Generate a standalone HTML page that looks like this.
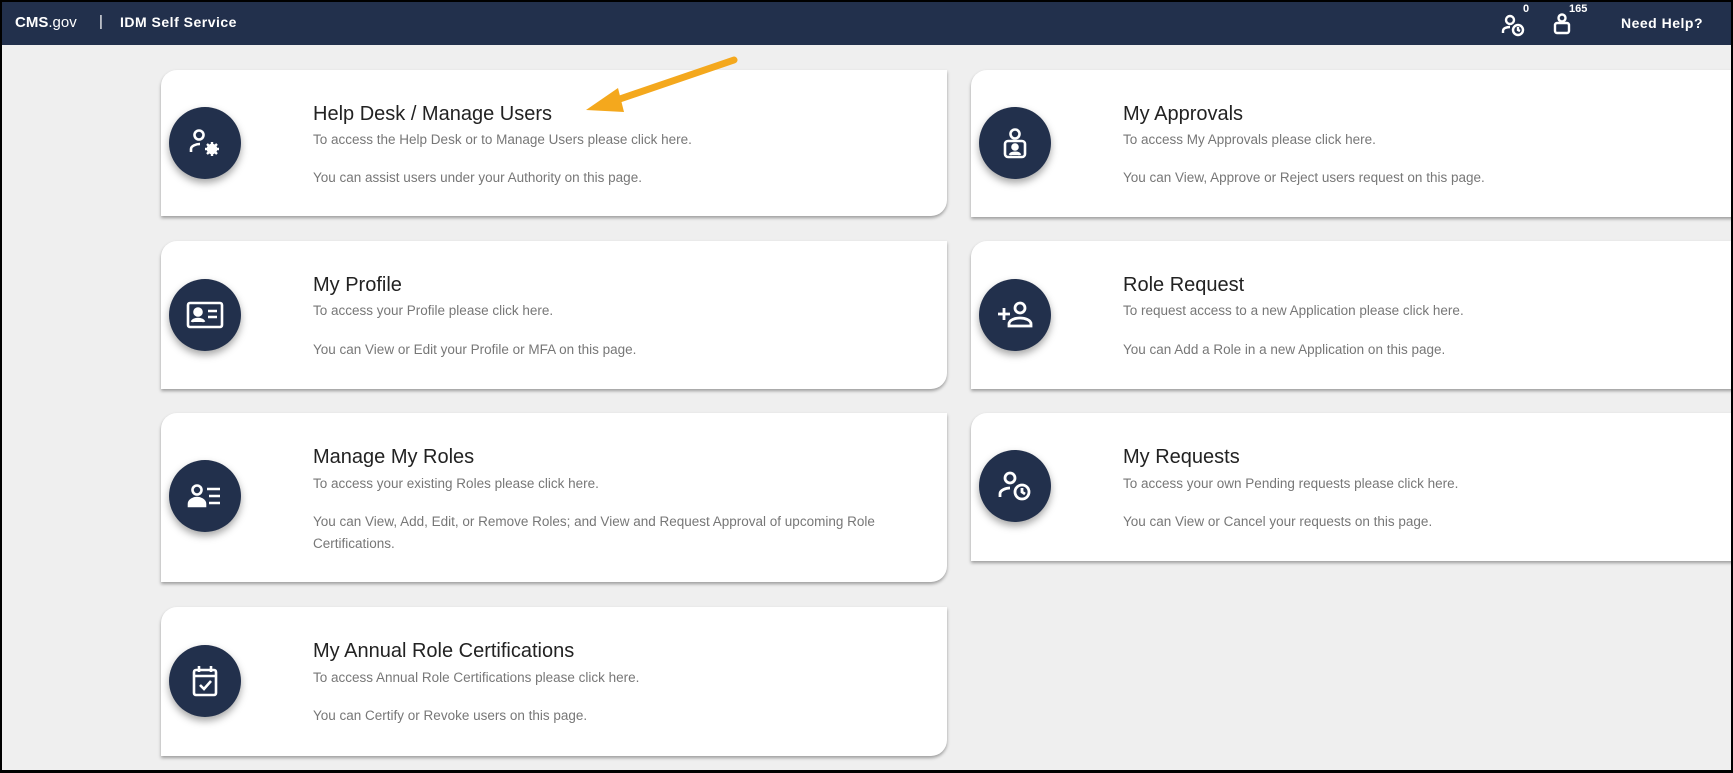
<!DOCTYPE html>
<html><head><meta charset="utf-8"><style>
*{margin:0;padding:0;box-sizing:border-box}
html,body{width:1733px;height:773px;overflow:hidden}
body{background:#000;font-family:"Liberation Sans",sans-serif;position:relative}
#wrap{position:absolute;left:2px;top:2px;width:1729px;height:768px;background:#efefef;overflow:hidden}
#hdr{position:absolute;left:0;top:0;width:100%;height:43px;background:#22304c;color:#fff}
.card{position:absolute;background:#fff;border-radius:16px 0 16px 0;box-shadow:0 2px 3px rgba(0,0,0,.35)}
.circ{position:absolute;width:72px;height:72px;border-radius:50%;background:#22304c;box-shadow:0 4px 8px rgba(0,0,0,.35);display:flex;align-items:center;justify-content:center}
.t{position:absolute;font-size:20px;color:#222}
.s{position:absolute;font-size:13.5px;color:#777;line-height:22px}
</style></head><body><div id="wrap">
<div id="hdr">
<div style="position:absolute;left:13px;top:12px;font-size:15px"><b>CMS</b>.gov</div>
<div style="position:absolute;left:97px;top:11px;font-size:15px">|</div>
<div style="position:absolute;left:118px;top:12px;font-size:14px;font-weight:bold;letter-spacing:.5px">IDM Self Service</div>
<svg style="position:absolute;left:1498px;top:10px" width="28" height="26" viewBox="0 0 28 26" fill="none" stroke="#fff" stroke-width="2.4"><circle cx="10" cy="8" r="4"/><path d="M3 21v-2c0-3 4-4 7-4"/><circle cx="18" cy="18" r="5"/><path d="M18 15v3l2 1"/></svg>
<div style="position:absolute;left:1521px;top:1px;font-size:11px;font-weight:bold">0</div>
<svg style="position:absolute;left:1550px;top:10px" width="20" height="24" viewBox="0 0 20 24" fill="none" stroke="#fff" stroke-width="2.4"><circle cx="10" cy="6" r="3.5"/><rect x="3" y="11" width="14" height="10" rx="2"/></svg>
<div style="position:absolute;left:1567px;top:1px;font-size:11px;font-weight:bold">165</div>
<div style="position:absolute;left:1619px;top:13px;font-size:14px;font-weight:bold;letter-spacing:.5px">Need Help?</div>
</div>

<!-- left column -->
<div class="card" style="left:159px;top:68px;width:786px;height:146px"></div>
<div class="circ" style="left:167px;top:105px"><svg width="34" height="30" viewBox="0 0 34 30" fill="none" stroke="#fff" stroke-width="2.6"><circle cx="11" cy="7" r="4.5"/><path d="M3 24v-3c0-3 5-5 9-5"/><circle cx="24" cy="21" r="4" fill="#fff"/><path d="M24 14v14M17 21h14M19 16l10 10M29 16l-10 10" stroke-width="2.4"/></svg></div>
<div class="t" style="left:311px;top:101px">Help Desk / Manage Users</div>
<div class="s" style="left:311px;top:127px">To access the Help Desk or to Manage Users please click here.</div>
<div class="s" style="left:311px;top:165px">You can assist users under your Authority on this page.</div>

<div class="card" style="left:159px;top:239px;width:786px;height:148px"></div>
<div class="circ" style="left:167px;top:277px"><svg width="40" height="32" viewBox="0 0 40 32" fill="none" stroke="#fff" stroke-width="2.6"><rect x="3" y="4" width="34" height="24" rx="2"/><circle cx="13" cy="13" r="3.5" fill="#fff"/><path d="M7 23c1-4 11-4 12 0" fill="#fff"/><path d="M23 12h9M23 18h9"/></svg></div>
<div class="t" style="left:311px;top:272px">My Profile</div>
<div class="s" style="left:311px;top:298px">To access your Profile please click here.</div>
<div class="s" style="left:311px;top:337px">You can View or Edit your Profile or MFA on this page.</div>

<div class="card" style="left:159px;top:411px;width:786px;height:169px"></div>
<div class="circ" style="left:167px;top:458px"><svg width="36" height="30" viewBox="0 0 36 30" fill="none" stroke="#fff" stroke-width="2.6"><circle cx="10" cy="9" r="4.5"/><path d="M2 25v-2c0-4 5-6 8-6s8 2 8 6v2z" fill="#fff"/><path d="M20 8h13M22 15h11M22 22h11"/></svg></div>
<div class="t" style="left:311px;top:444px">Manage My Roles</div>
<div class="s" style="left:311px;top:471px">To access your existing Roles please click here.</div>
<div class="s" style="left:311px;top:509px;width:620px">You can View, Add, Edit, or Remove Roles; and View and Request Approval of upcoming Role Certifications.</div>

<div class="card" style="left:159px;top:605px;width:786px;height:149px"></div>
<div class="circ" style="left:167px;top:643px"><svg width="30" height="34" viewBox="0 0 30 34" fill="none" stroke="#fff" stroke-width="2.6"><rect x="4" y="6" width="22" height="25" rx="2"/><path d="M4 12h22M9 2v6M21 2v6M10 21l4 4 7-8"/></svg></div>
<div class="t" style="left:311px;top:638px">My Annual Role Certifications</div>
<div class="s" style="left:311px;top:665px">To access Annual Role Certifications please click here.</div>
<div class="s" style="left:311px;top:703px">You can Certify or Revoke users on this page.</div>

<!-- right column -->
<div class="card" style="left:969px;top:68px;width:790px;height:147px"></div>
<div class="circ" style="left:977px;top:105px"><svg width="26" height="32" viewBox="0 0 26 32" fill="none" stroke="#fff" stroke-width="2.6"><circle cx="13" cy="7" r="4.5"/><rect x="3" y="14" width="20" height="16" rx="3"/><circle cx="13" cy="20" r="2.5" fill="#fff"/><path d="M8 28c1-3 9-3 10 0" fill="#fff"/></svg></div>
<div class="t" style="left:1121px;top:101px">My Approvals</div>
<div class="s" style="left:1121px;top:127px">To access My Approvals please click here.</div>
<div class="s" style="left:1121px;top:165px">You can View, Approve or Reject users request on this page.</div>

<div class="card" style="left:969px;top:239px;width:790px;height:148px"></div>
<div class="circ" style="left:977px;top:277px"><svg width="38" height="30" viewBox="0 0 38 30" fill="none" stroke="#fff" stroke-width="2.8"><circle cx="24" cy="8" r="5"/><path d="M13 26v-2c0-4 6-6 11-6s11 2 11 6v2z"/><path d="M8 8v12M2 14h12"/></svg></div>
<div class="t" style="left:1121px;top:272px">Role Request</div>
<div class="s" style="left:1121px;top:298px">To request access to a new Application please click here.</div>
<div class="s" style="left:1121px;top:337px">You can Add a Role in a new Application on this page.</div>

<div class="card" style="left:969px;top:411px;width:790px;height:148px"></div>
<div class="circ" style="left:977px;top:448px"><svg width="38" height="32" viewBox="0 0 38 32" fill="none" stroke="#fff" stroke-width="2.8"><circle cx="14" cy="8" r="5"/><path d="M4 27v-3c0-4 6-6 10-6"/><circle cx="26" cy="22" r="7"/><path d="M26 18v4l3 2"/></svg></div>
<div class="t" style="left:1121px;top:444px">My Requests</div>
<div class="s" style="left:1121px;top:471px">To access your own Pending requests please click here.</div>
<div class="s" style="left:1121px;top:509px">You can View or Cancel your requests on this page.</div>

<svg style="position:absolute;left:0;top:0" width="1729" height="768"><path d="M732 58 L612 99" stroke="#f4a81d" stroke-width="7" stroke-linecap="round"/><polygon points="584,108 616,86 622,110" fill="#f4a81d"/></svg>
</div></body></html>
